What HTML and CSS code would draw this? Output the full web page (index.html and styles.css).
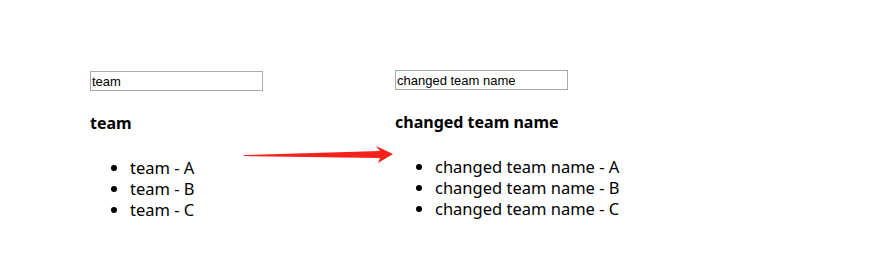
FILE: index.html
```html
<!doctype html>
<html lang="en">
    <head>
        <meta charset="utf-8" />
        <title>team name</title>
        <link rel="stylesheet" href="styles.css">
    </head>
 <body>
    <div class="page">
        <div class="col col-left">
            <input class="name-input" type="text" value="team">
            <h3 class="team-title">team</h3>
            <ul class="team-list">
                <li>team - A</li>
                <li>team - B</li>
                <li>team - C</li>
            </ul>
        </div>
        <div class="col col-right">
            <input class="name-input" type="text" value="changed team name">
            <h3 class="team-title">changed team name</h3>
            <ul class="team-list">
                <li>changed team name - A</li>
                <li>changed team name - B</li>
                <li>changed team name - C</li>
            </ul>
        </div>
        <!-- arrow over the gap between the columns -->
        <svg class="arrow" width="160" height="30" viewBox="0 0 160 30">
            <polygon points="4,15 140,11 136,6 153,14 138,23 140,18 4,16" fill="#f5211b"/>
        </svg>
    </div>
 </body>
</html>
```
FILE: styles.css
```css
*{
    margin:0;
    padding:0;
}
body{
    background:#fff;
    font-family:"Noto Sans","Open Sans",sans-serif;
    color:#000;
}
.page{
    position:relative;
    display:flex;
    padding:70px 0 0 90px;
    height:274px;
    box-sizing:border-box;
}
.col-left{
    width:305px;
    padding-top:1px;
}
.name-input{
    display:block;
    width:173px;
    height:20px;
    box-sizing:border-box;
    border:1px solid #a9a9a9;
    padding:1px 1px;
    font-family:"Liberation Sans",Arial,sans-serif;
    font-size:13px;
    color:#000;
    outline:none;
}
.team-title{
    font-size:16px;
    font-weight:bold;
    line-height:21px;
    margin-top:22px;
}
.team-list{
    margin-top:23px;
    padding-left:40px;
    font-size:16.5px;
    line-height:21px;
}
.arrow{
    position:absolute;
    left:240px;
    top:140px;
}
```
